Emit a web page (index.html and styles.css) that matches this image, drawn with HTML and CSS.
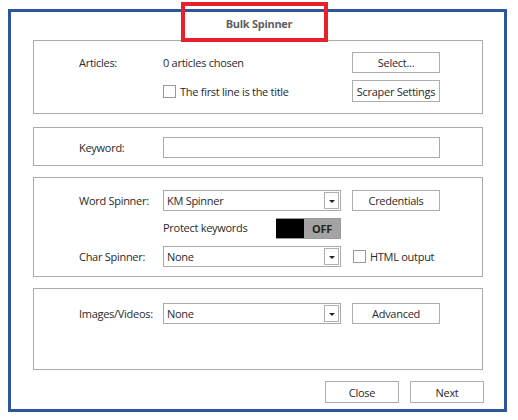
FILE: index.html
```html
<!DOCTYPE html>
<html>
<head>
<meta charset="utf-8">
<link rel="stylesheet" href="styles.css">
</head>
<body>
<div class="frame">
  <div class="title">Bulk Spinner</div>
  <div class="group g1">
    <div class="row r1">
      <div class="label">Articles:</div>
      <div class="field">0 articles chosen</div>
      <div class="btn">Select...</div>
    </div>
    <div class="row r2">
      <div class="label"></div>
      <div class="field check-line"><span class="check"></span>The first line is the title</div>
      <div class="btn tall">Scraper Settings</div>
    </div>
  </div>
  <div class="group g2">
    <div class="row">
      <div class="label">Keyword:</div>
      <div class="input wide"></div>
    </div>
  </div>
  <div class="group g3">
    <div class="row">
      <div class="label">Word Spinner:</div>
      <div class="select"><span class="val">KM Spinner</span><span class="arrow"></span></div>
      <div class="btn">Credentials</div>
    </div>
    <div class="row r-toggle">
      <div class="label"></div>
      <div class="field toggle-line">
        <span>Protect keywords</span>
        <span class="toggle"><span class="knob"></span><span class="off">OFF</span></span>
      </div>
    </div>
    <div class="row">
      <div class="label">Char Spinner:</div>
      <div class="select"><span class="val">None</span><span class="arrow"></span></div>
      <div class="check-line html"><span class="check"></span>HTML output</div>
    </div>
  </div>
  <div class="group g4">
    <div class="row">
      <div class="label">Images/Videos:</div>
      <div class="select"><span class="val">None</span><span class="arrow"></span></div>
      <div class="btn">Advanced</div>
    </div>
  </div>
  <div class="footer">
    <div class="btn fbtn">Close</div>
    <div class="btn fbtn">Next</div>
  </div>
  <div class="highlight"></div>
</div>
</body>
</html>
```
FILE: styles.css
```css
* { box-sizing: border-box; }
html, body { margin: 0; padding: 0; background: #fff; }
body {
  font-family: "Open Sans", "Noto Sans", sans-serif;
  font-size: 11px;
  letter-spacing: -0.28px;
  color: #2a2a2a;
}
.frame {
  position: relative;
  margin: 9px 0 0 8px;
  width: 499px;
  height: 403px;
  border: 3px solid #2c5699;
  padding: 0 21px 0 22px;
  display: flex;
  flex-direction: column;
}
.title {
  height: 28px;
  line-height: 24px;
  text-align: center;
  font-weight: 700;
  color: #5f5f5f;
  font-size: 11px;
  padding-left: 2px;
}
.group {
  border: 1px solid #aaa;
  padding-left: 45px;
  display: flex;
  flex-direction: column;
}
.g1 { height: 74px; padding-top: 11px; gap: 7px; }
.g2 { height: 39px; padding-top: 9px; margin-top: 13px; }
.g3 { height: 100px; padding-top: 12px; gap: 7px; margin-top: 11px; }
.g4 { height: 82px; padding-top: 14px; margin-top: 11px; }
.row {
  display: flex;
  align-items: center;
  height: 21px;
}
.r2 { height: 22px; }
.label { width: 84px; flex: none; }
.field { width: 178px; flex: none; margin-right: 11px; }
.btn {
  width: 88px;
  height: 21px;
  border: 1px solid #adadad;
  background: #fff;
  display: flex;
  align-items: center;
  justify-content: center;
  flex: none;
  white-space: nowrap;
}
.btn.tall { height: 22px; }
.check-line { display: flex; align-items: center; }
.check {
  width: 13px;
  height: 13px;
  border: 1px solid #999;
  background: #fff;
  margin-right: 4px;
  flex: none;
}
.input {
  height: 21px;
  border: 1px solid #aaa;
  background: #fff;
}
.input.wide { width: 277px; }
.select {
  width: 178px;
  height: 21px;
  border: 1px solid #aaa;
  margin-right: 11px;
  display: flex;
  align-items: center;
  padding: 1px;
  flex: none;
}
.select .val { flex: 1; padding-left: 2px; }
.select .arrow {
  width: 15px;
  height: 17px;
  border: 1px solid #b0b0b0;
  position: relative;
  flex: none;
}
.select .arrow::after {
  content: "";
  position: absolute;
  left: 4px;
  top: 7px;
  border-left: 3px solid transparent;
  border-right: 3px solid transparent;
  border-top: 3px solid #222;
}
.toggle-line { display: flex; align-items: center; justify-content: space-between; }
.toggle-line span:first-child { padding-bottom: 2px; }
.r-toggle { height: 21px; }
.toggle {
  display: flex;
  width: 65px;
  height: 21px;
  border: 1px solid #9a9a9a;
  border-left: none;
}
.toggle .knob { width: 28px; background: #000; }
.toggle .off {
  flex: 1;
  background: #a3a3a3;
  font-weight: 700;
  color: #222;
  display: flex;
  align-items: center;
  justify-content: center;
}
.html { margin-left: 1px; }
.footer {
  margin-top: 11px;
  display: flex;
  justify-content: flex-end;
  gap: 11px;
  margin-right: -1px;
}
.fbtn { width: 74px; height: 22px; }
.highlight {
  position: absolute;
  left: 170px;
  top: -10px;
  width: 147px;
  height: 40px;
  border: 4px solid #e8202a;
}
```
